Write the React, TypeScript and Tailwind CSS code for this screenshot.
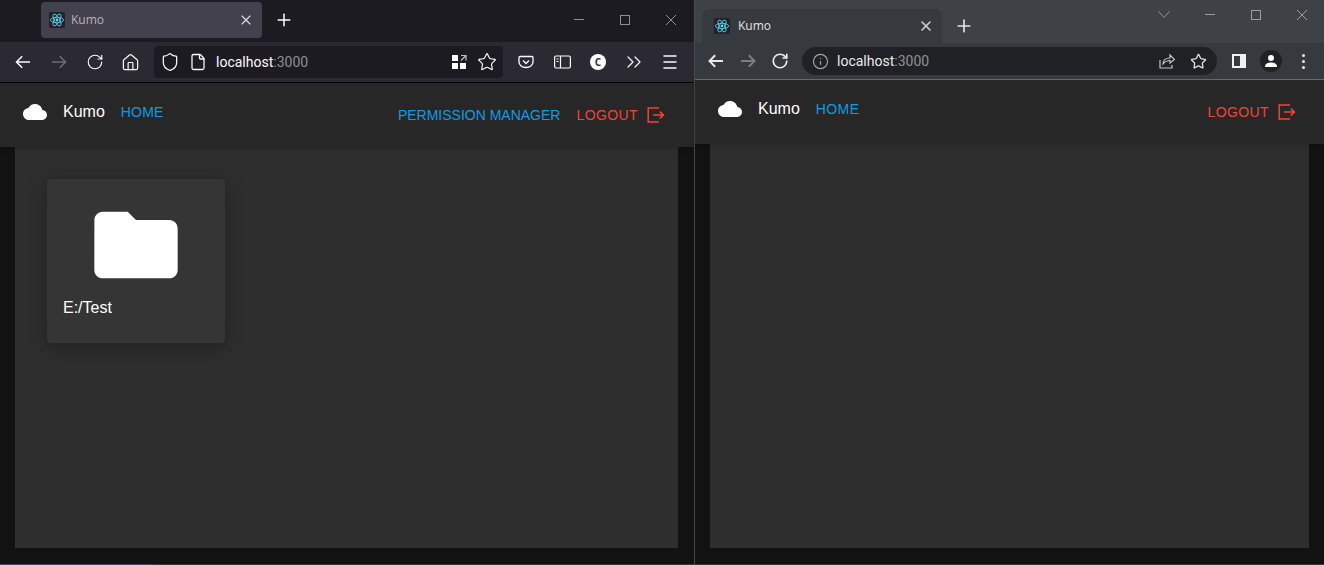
import { ChevronsRight, File, Home, Info, Plus, RotateCw, Shield, Star, X } from 'lucide-react';

const FONT = "font-['Liberation_Sans',Arial,sans-serif]";
const UI_FONT = "font-['Open_Sans','Noto_Sans',sans-serif]";
const URL_FONT = "font-['Roboto',sans-serif]";

function ReactIcon() {
  return (
    <svg width="16" height="16" viewBox="0 0 16 16" className="shrink-0">
      <rect width="16" height="16" rx="2" fill="#20232a" />
      <g fill="none" stroke="#61dafb" strokeWidth="0.8">
        <ellipse cx="8" cy="8" rx="6.6" ry="2.7" />
        <ellipse cx="8" cy="8" rx="6.6" ry="2.7" transform="rotate(60 8 8)" />
        <ellipse cx="8" cy="8" rx="6.6" ry="2.7" transform="rotate(120 8 8)" />
      </g>
      <circle cx="8" cy="8" r="1.4" fill="#61dafb" />
    </svg>
  );
}

function CloudIcon() {
  return (
    <svg width="24" height="24" viewBox="0 0 24 24" fill="#fff" className="shrink-0">
      <path d="M19.35 10.04C18.67 6.59 15.64 4 12 4 9.11 4 6.6 5.64 5.35 8.04 2.34 8.36 0 10.91 0 14c0 3.31 2.69 6 6 6h13c2.76 0 5-2.24 5-5 0-2.64-2.05-4.78-4.65-4.96z" />
    </svg>
  );
}

function LogoutIcon() {
  return (
    <svg width="18" height="16" viewBox="0 0 18 16" fill="none" stroke="#f44336" strokeWidth="1.5" className="shrink-0">
      <path d="M12 1H1.2v14H12" />
      <path d="M6 8h10.5M12.8 4.6 16.5 8l-3.7 3.4" />
    </svg>
  );
}

// toolbar arrows, lucide's are too short for these browsers
function NavArrow({ right, width, color }: { right?: boolean; width: number; color: string }) {
  return (
    <svg width="16" height="16" viewBox="0 0 16 16" fill="none" stroke={color} strokeWidth={width} className={right ? 'rotate-180' : ''}>
      <path d="M15 8H1.5M7.2 2.3 1.5 8l5.7 5.7" />
    </svg>
  );
}

function Slot({ w, children }: { w: string; children: React.ReactNode }) {
  return <div className={`flex shrink-0 items-center justify-center ${w}`}>{children}</div>;
}

function WindowControls({ color, gap }: { color: string; gap: string }) {
  return (
    <div className={`flex items-center ${gap}`}>
      <svg width="10" height="10" viewBox="0 0 10 10" stroke={color}><path d="M0 4.5h10" /></svg>
      <svg width="10" height="10" viewBox="0 0 10 10" stroke={color} fill="none"><rect x="0.5" y="0.5" width="9" height="9" /></svg>
      <svg width="10" height="10" viewBox="0 0 10 10" stroke={color}><path d="M0 0l10 10M10 0L0 10" /></svg>
    </div>
  );
}

function NavBar({ children, homeClass }: { children: React.ReactNode; homeClass: string }) {
  return (
    <div className={`relative z-10 flex h-[64px] shrink-0 items-start bg-[#272727] pl-[23px] shadow-[0_2px_4px_rgba(0,0,0,0.15)] ${FONT}`}>
      <div className="mt-[17px]"><CloudIcon /></div>
      <span className="ml-[16px] mt-[20px] text-[16px] leading-[18px] text-white">Kumo</span>
      <span className={`ml-[16px] mt-[20px] text-[14px] leading-[18px] text-[#0e9be6] ${homeClass}`}>HOME</span>
      <div className="ml-auto mt-[23px] flex items-center">{children}</div>
    </div>
  );
}

function Logout() {
  return (
    <>
      <span className="text-[14px] leading-[18px] tracking-[0.4px] text-[#f44336]">LOGOUT</span>
      <span className="ml-[9px]"><LogoutIcon /></span>
    </>
  );
}

function Firefox() {
  return (
    <div className="flex h-full w-[694px] shrink-0 flex-col">
      <div className={`flex h-[42px] shrink-0 items-start bg-[#1c1b22] pl-[41px] ${UI_FONT}`}>
        <div className="mt-[2px] flex h-[36px] w-[221px] items-center rounded-[4px] bg-[#42414d] pl-[8px] pr-[8px]">
          <ReactIcon />
          <span className="ml-[6px] text-[12px] text-[#b5b5ba]">Kumo</span>
          <X size={16} strokeWidth={1.6} className="ml-auto text-[#e0e0e6]" />
        </div>
        <Plus size={20} strokeWidth={1.8} className="ml-[12px] mt-[10px] text-white" />
        <div className="ml-auto mr-[18px] mt-[15px]"><WindowControls color="#8e8e93" gap="gap-[36px]" /></div>
      </div>
      <div className={`flex h-[41px] shrink-0 items-center border-b border-black bg-[#2b2a33] pl-[5px] text-[#fbfbfe] ${UI_FONT}`}>
        <Slot w="w-[36px]"><NavArrow width={1.5} color="#fbfbfe" /></Slot>
        <Slot w="w-[36px]"><NavArrow right width={1.5} color="#6f6e75" /></Slot>
        <Slot w="w-[36px]"><RotateCw size={18} strokeWidth={1.5} /></Slot>
        <Slot w="w-[35px]"><Home size={19} strokeWidth={1.5} /></Slot>
        <div className="ml-[6px] flex h-[32px] w-[349px] shrink-0 items-center rounded-[4px] bg-[#1c1b22] pl-[6px] pr-[6px]">
          <Shield size={20} strokeWidth={1.5} />
          <File size={18} strokeWidth={1.7} className="ml-[9px]" />
          <span className={`ml-[9px] text-[14px] ${URL_FONT}`}>localhost<span className="text-[#8f8f94]">:3000</span></span>
          <svg width="16" height="16" viewBox="0 0 16 16" fill="#fff" className="ml-auto">
            <rect x="1" y="1" width="6" height="6" /><rect x="1" y="9" width="6" height="6" /><rect x="9" y="9" width="6" height="6" />
            <path d="M10 1.5h5v5M15 1.5 10 6.5" fill="none" stroke="#bbb" strokeWidth="1.2" />
          </svg>
          <Star size={20} strokeWidth={1.4} className="ml-[10px]" />
        </div>
        <div className="ml-[5px] flex">
          <Slot w="w-[36px]">
            <svg width="16" height="16" viewBox="0 0 16 16" fill="none" stroke="#fbfbfe" strokeWidth="1.3">
              <path d="M2 2.5h12a1 1 0 0 1 1 1V8a7 5.5 0 0 1-14 0V3.5a1 1 0 0 1 1-1z" /><path d="M5 6.5 8 9.5l3-3" />
            </svg>
          </Slot>
          <Slot w="w-[36px]">
            <svg width="17" height="14" viewBox="0 0 17 14" fill="none" stroke="#fbfbfe" strokeWidth="1.2">
              <rect x="0.6" y="1" width="15.8" height="12" rx="1.5" /><path d="M6.5 1v12M2.5 4h2M2.5 6.5h2" />
            </svg>
          </Slot>
          <Slot w="w-[36px]">
            <div className="flex h-[16px] w-[16px] items-center justify-center rounded-full bg-white text-[10px] font-bold leading-none text-[#2b2a33]">C</div>
          </Slot>
          <Slot w="w-[36px]"><ChevronsRight size={24} strokeWidth={1.2} /></Slot>
          <Slot w="w-[36px]">
            <svg width="14" height="14" viewBox="0 0 14 14" stroke="#fbfbfe" strokeWidth="1.4"><path d="M0.5 1h13M0.5 7h13M0.5 13h13" /></svg>
          </Slot>
        </div>
      </div>
      <NavBar homeClass="tracking-[0.2px]">
        <span className="mr-[16px] text-[14px] leading-[18px] text-[#0e9be6]">PERMISSION MANAGER</span>
        <Logout />
        <span className="w-[29px]" />
      </NavBar>
      <div className={`flex min-h-0 flex-1 flex-col bg-[#121212] pb-[16px] pl-[15px] pr-[16px] ${FONT}`}>
        <div className="flex-1 bg-[#2e2e2e] pl-[32px] pt-[32px]">
          <div className="flex h-[164px] w-[178px] flex-col rounded-[4px] bg-[#353535] px-[16px] shadow-[0_4px_20px_rgba(0,0,0,0.3)]">
            <svg width="100" height="100" viewBox="0 0 24 24" fill="#fff" className="ml-[23px] mt-[16px] shrink-0">
              <path d="M10 4H4c-1.1 0-1.99.9-1.99 2L2 18c0 1.1.9 2 2 2h16c1.1 0 2-.9 2-2V8c0-1.1-.9-2-2-2h-8l-2-2z" />
            </svg>
            <span className="mt-[4px] text-[16px] leading-[18px] text-white">E:/Test</span>
          </div>
        </div>
      </div>
    </div>
  );
}

function Chrome() {
  return (
    <div className="flex h-full min-w-0 flex-1 flex-col">
      <div className={`flex h-[43px] shrink-0 items-start bg-[#3e4246] pl-[7px] ${UI_FONT}`}>
        <div className="mt-[9px] flex h-[34px] w-[240px] items-center rounded-t-[8px] bg-[#36393d] pl-[12px] pr-[8px]">
          <ReactIcon />
          <span className="ml-[8px] text-[12px] text-[#e3e3e3]">Kumo</span>
          <X size={16} strokeWidth={2.4} className="ml-auto text-[#d0d0d0]" />
        </div>
        <Plus size={20} strokeWidth={2} className="ml-[12px] mt-[16px] text-[#e3e3e3]" />
        <svg width="12" height="8" viewBox="0 0 12 8" fill="none" stroke="#8f9296" className="ml-auto mt-[11px]"><path d="M0.5 0.5 6 6.5l5.5-6" /></svg>
        <div className="ml-[35px] mr-[17px] mt-[10px]"><WindowControls color="#9a9da1" gap="gap-[36px]" /></div>
      </div>
      <div className={`flex h-[37px] shrink-0 items-center border-b border-[#6a6d70] bg-[#36393d] pl-[5px] text-[#e8eaed] ${UI_FONT}`}>
        <Slot w="w-[32px]"><NavArrow width={2} color="#e8eaed" /></Slot>
        <Slot w="w-[32px]"><NavArrow right width={2} color="#7a7c7f" /></Slot>
        <Slot w="w-[32px]"><RotateCw size={18} strokeWidth={2.2} /></Slot>
        <div className="ml-[6px] flex h-[28px] w-[415px] shrink-0 items-center rounded-full bg-[#202124] pl-[10px] pr-[10px]">
          <Info size={17} strokeWidth={1.7} className="text-[#a0a2a5]" />
          <span className={`ml-[8px] text-[14px] ${URL_FONT}`}>localhost<span className="text-[#8f9194]">:3000</span></span>
          <svg width="16" height="16" viewBox="0 0 16 16" fill="none" stroke="#c4c6c9" strokeWidth="1.2" className="ml-auto">
            <path d="M1 7v8h12v-3" /><path d="M4 11c0-4 3-6 7-6V2l4.5 4.5L11 10V7.5c-3 0-5 1-7 3.5z" />
          </svg>
          <Star size={17} strokeWidth={1.8} className="ml-[15px] text-[#e0e0e0]" />
        </div>
        <div className="ml-[15px] flex h-[14px] w-[14px] justify-end border-2 border-[#f0f0f0] bg-[#36393d]"><div className="h-full w-[4px] bg-[#f0f0f0]" /></div>
        <div className="ml-[14px] flex h-[22px] w-[22px] items-center justify-center rounded-full bg-[#202124]">
          <svg width="14" height="14" viewBox="0 0 14 14" fill="#fff"><circle cx="7" cy="4" r="3" /><path d="M1 13c0-3.5 3-4.5 6-4.5s6 1 6 4.5z" /></svg>
        </div>
        <div className="ml-[20px] flex flex-col gap-[3px]">
          <div className="h-[3px] w-[3px] rounded-full bg-[#e8eaed]" /><div className="h-[3px] w-[3px] rounded-full bg-[#e8eaed]" /><div className="h-[3px] w-[3px] rounded-full bg-[#e8eaed]" />
        </div>
      </div>
      <NavBar homeClass="tracking-[0.4px]">
        <Logout />
        <span className="w-[28px]" />
      </NavBar>
      <div className="flex min-h-0 flex-1 flex-col bg-[#121212] px-[15px] pb-[16px]">
        <div className="flex-1 bg-[#2e2e2e]" />
      </div>
    </div>
  );
}

export default function App() {
  return (
    <div className="flex h-[565px] w-[1324px] flex-col overflow-hidden bg-[#121212]">
      <div className="flex min-h-0 flex-1">
        <Firefox />
        <div className="w-[1px] shrink-0 bg-[#4a4a4a]" />
        <Chrome />
      </div>
      <div className="flex h-[1px] shrink-0 bg-[#3a3a3a]">
        <div className="w-[155px] bg-[#3a4660]" />
      </div>
    </div>
  );
}
